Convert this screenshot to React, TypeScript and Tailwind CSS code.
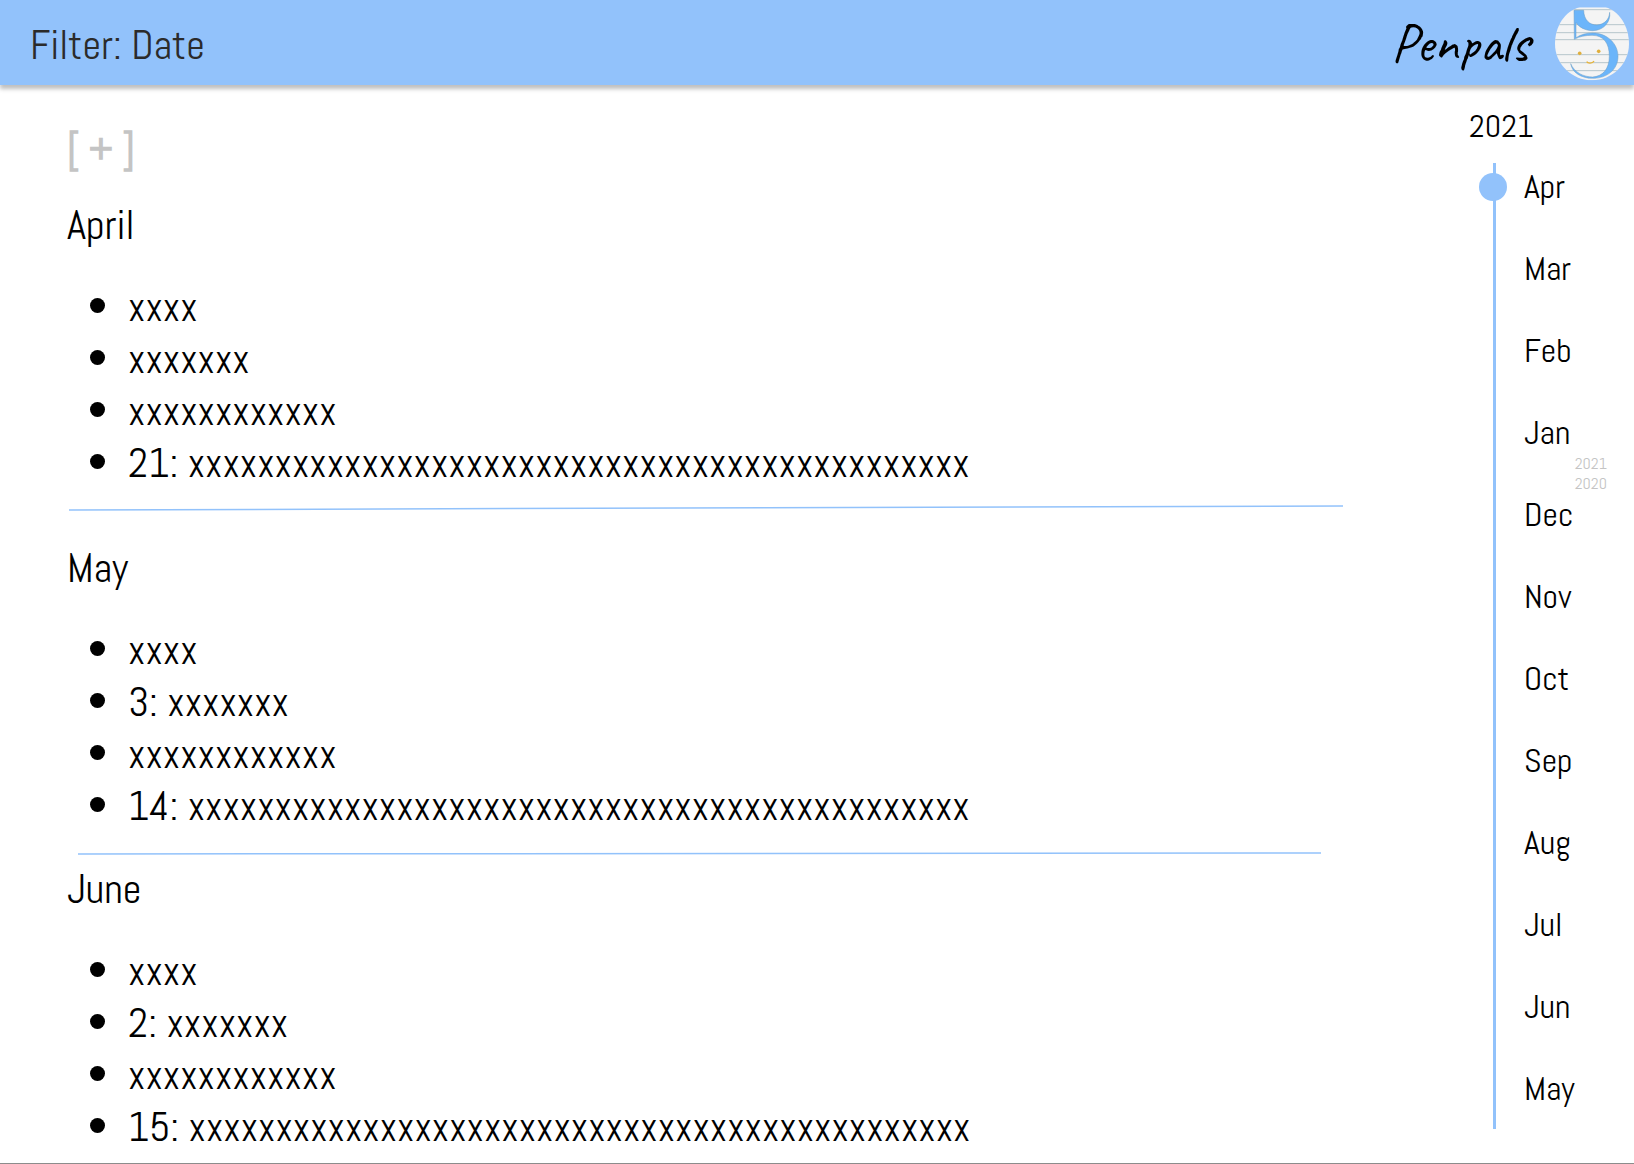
const sans = "font-['Abel','Roboto_Condensed','Roboto',sans-serif]";

const run = (n: number) => "x".repeat(n);

const months = [
  { name: "April", items: [run(4), run(7), run(12), "21: " + run(45)] },
  { name: "May", items: [run(4), "3: " + run(7), run(12), "14: " + run(45)] },
  { name: "June", items: [run(4), "2: " + run(7), run(12), "15: " + run(45)] },
];

const timeline = ["Apr", "Mar", "Feb", "Jan", "Dec", "Nov", "Oct", "Sep", "Aug", "Jul", "Jun", "May"];

function Logo() {
  return (
    <svg viewBox="14 20 222 222" className="mt-0.5 size-[74px]" role="img" aria-label="Penpals logo">
      <clipPath id="badge">
        <path d="M88 21H166C206 32 236 78 236 131C236 190 186 240 125 240C64 240 14 190 14 131C14 78 44 32 88 21Z" />
      </clipPath>
      <g clipPath="url(#badge)">
        <rect x="14" y="20" width="222" height="222" fill="#f4f4f4" />
        <path d="M14 28H236M14 73H236M14 97H236M14 118H236M14 163H236M14 187H236M14 211H236" stroke="#a9bcc3" strokeWidth="2.5" />
        <path
          d="M71 30H100C101 60 118 74 140 74C162 73 177 57 178 36C182 64 160 91 127 91C104 91 86 80 77 67V112C92 102 110 98 127 98C170 98 203 130 203 168C203 208 170 234 127 234C92 234 65 216 61 190C72 216 100 230 127 230C158 228 177 205 177 168C177 128 160 105 125 105C105 105 88 108 72 117Z"
          fill="#6bb5fa"
          stroke="#6f9fc4"
          strokeWidth="1.5"
        />
        <circle cx="88" cy="159" r="5.5" fill="#e0af3c" />
        <circle cx="145" cy="153" r="5.5" fill="#e0af3c" />
        <path d="M109 184C112 190 127 190 131 182" fill="none" stroke="#e8b43a" strokeWidth="4" />
      </g>
    </svg>
  );
}

function Divider({ slanted }: { slanted: boolean }) {
  return slanted ? (
    <svg className="mt-[15px] mb-[30px] ml-[2px] block h-2 w-full" aria-hidden="true">
      <line x1="0" y1="6" x2="100%" y2="2" stroke="#92c2fb" strokeWidth="1.5" />
    </svg>
  ) : (
    <svg className="mt-[18px] mb-[5px] ml-[11px] block h-2 w-[calc(100%-31px)]" aria-hidden="true">
      <line x1="0" y1="4" x2="100%" y2="3" stroke="#92c2fb" strokeWidth="1.5" />
    </svg>
  );
}

export default function App() {
  return (
    <div className={`flex min-h-screen flex-col border-b border-[#8c8c8c] bg-white text-black ${sans}`}>
      <header className="relative flex h-[85px] items-center justify-between bg-[#92c2fb] pr-[5px] pl-[30px] shadow-[0_4px_4px_rgba(0,0,0,0.25)]">
        <button type="button" className="pt-1 text-[41px] leading-[52px] text-[#2b2b2b]">
          Filter: Date
        </button>
        <a href="#home" className="flex items-center gap-[26px]">
          <span className="font-['Caveat','Lato',cursive] text-[55px] leading-[52px]">Penpals</span>
          <Logo />
        </a>
      </header>

      <div className="flex flex-1 justify-between">
        <main className="ml-[67px] max-w-[1274px] flex-1 pt-[34px]">
          <button type="button" aria-label="Add entry" className="block h-[60px] text-[41px] leading-[52px] font-bold text-[#c4c4c4]">
            [ + ]
          </button>
          <div className="mt-5">
            {months.map((month, i) => (
              <section key={month.name}>
                <h2 className="text-[41px] leading-[52px]">{month.name}</h2>
                <ul className="mt-[30px]">
                  {month.items.map((item) => (
                    <li key={item} className="ml-[23px] flex items-start gap-[23px] text-[41px] leading-[52px]">
                      <span className="mt-[17px] size-[15px] shrink-0 rounded-full bg-black" />
                      {item}
                    </li>
                  ))}
                </ul>
                {i < months.length - 1 && <Divider slanted={i === 0} />}
              </section>
            ))}
          </div>
        </main>

        <nav aria-label="Timeline" className="w-[165px] pt-[22px]">
          <h2 className="text-[32px] leading-[39px]">2021</h2>
          <div className="flex">
            <div className="mt-[17px] mb-px ml-6 w-[3px] bg-[#92c2fb]" />
            <ol className="flex-1">
              {timeline.map((label, i) => (
                <li key={label} className="relative flex h-[82px] items-center pl-7">
                  {i === 0 && <span className="absolute -left-[17px] size-7 rounded-full bg-[#92c2fb]" />}
                  <a href={`#${label}`} className="text-[34px] leading-[42px]">
                    {label}
                  </a>
                  {label === "Dec" && (
                    <span className="absolute -top-5 right-[27px] text-[16px] leading-5 text-[#c4c4c4]">
                      2021
                      <br />
                      2020
                    </span>
                  )}
                </li>
              ))}
            </ol>
          </div>
        </nav>
      </div>
    </div>
  );
}
